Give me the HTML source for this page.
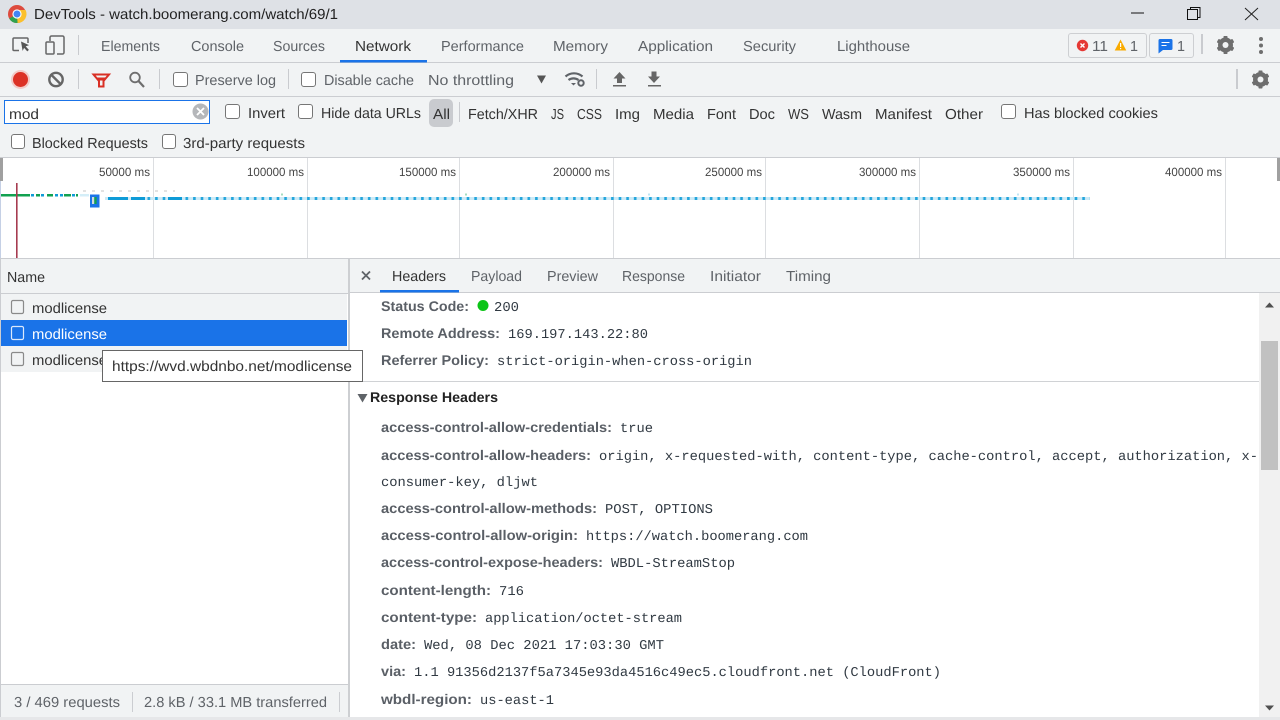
<!DOCTYPE html>
<html>
<head>
<meta charset="utf-8">
<style>
html,body{margin:0;padding:0;width:1280px;height:720px;overflow:hidden;background:#fff}
svg{display:block;position:absolute;left:0;top:0}
text{font-family:"Liberation Sans",sans-serif;font-size:14.5px;fill:#5f6368;white-space:pre;text-rendering:geometricPrecision}
.d{fill:#303942}
.k{fill:#333}
.b{font-weight:bold;font-size:14px;fill:#5a5f66;transform:translateY(-1px)}
.m{font-family:"Liberation Mono",monospace;font-size:13.5px;fill:#303942;transform:translateY(-1px)}
.t{font-size:12px;fill:#444}
.cb{fill:#fff;stroke:#767676;stroke-width:1}
</style>
</head>
<body>
<svg width="1280" height="720" viewBox="0 0 1280 720" xmlns="http://www.w3.org/2000/svg">
<defs>
<pattern id="dash" x="108" y="197" width="7.6" height="3" patternUnits="userSpaceOnUse">
<rect width="7.6" height="3" fill="#cdeaf6"/><rect x="1.500" width="2.600" height="3" fill="#22a5dc"/>
</pattern>
<g id="gear">
<circle r="5.6" fill="none" stroke="#6e6e6e" stroke-width="3.8"/>
<g fill="#6e6e6e">
<rect x="-2" y="-9" width="4" height="18" rx=".7"/>
<rect x="-2" y="-9" width="4" height="18" rx=".7" transform="rotate(60)"/>
<rect x="-2" y="-9" width="4" height="18" rx=".7" transform="rotate(120)"/>
</g>
<circle r="3" fill="#f1f3f4"/>
</g>
</defs>

<!-- title bar -->
<rect width="1280" height="29" fill="#dee1e6"/>
<circle cx="17" cy="14" r="9" fill="#dd4b3e"/>
<path d="M17 14 L9.2 18.5 A9 9 0 0 0 17.6 23 Z" fill="#2fa24f"/>
<path d="M17 14 L17.6 23 A9 9 0 0 0 25.6 10 L17 10 Z" fill="#fbc02d"/>
<circle cx="17" cy="14" r="4.6" fill="#fff"/><circle cx="17" cy="14" r="3.5" fill="#4285f4"/>
<text x="34" y="19" textLength="304" lengthAdjust="spacingAndGlyphs" style="fill:#222">DevTools - watch.boomerang.com/watch/69/1</text>
<path d="M1131 13h13" stroke="#111" stroke-width="1"/>
<path d="M1187.500 9.500h10v10h-10zM1190.500 9V7.500h9.500v10h-2.500" fill="none" stroke="#111" stroke-width="1"/>
<path d="M1245 8l13 12M1258 8l-13 12" stroke="#222" stroke-width="1"/>

<!-- tab bar -->
<rect y="29" width="1280" height="129" fill="#f1f3f4"/>
<rect y="62" width="1280" height="1" fill="#cbcdd1"/>
<rect y="96" width="1280" height="1" fill="#cbcdd1"/>
<path d="M19 50.500h-5a1 1 0 0 1-1-1V39a1 1 0 0 1 1-1h13a1 1 0 0 1 1 1v4" fill="none" stroke="#666" stroke-width="1.500"/>
<path d="M21 41.500l8 3.600-3.300 1.300 3.200 3.500-1.600 1.500-3.200-3.500-1.500 3z" fill="#555"/>
<path d="M50 41v-3.500a1.500 1.500 0 0 1 1.500-1.500h11a1.500 1.500 0 0 1 1.500 1.500v15a1.500 1.500 0 0 1-1.500 1.500H57" fill="none" stroke="#666" stroke-width="1.500"/>
<rect x="46" y="42" width="8" height="12" rx="1" fill="none" stroke="#666" stroke-width="1.500"/>
<rect x="78" y="35" width="1" height="20" fill="#c9cbcf"/>
<text x="101" y="51" textLength="59" lengthAdjust="spacingAndGlyphs">Elements</text>
<text x="191" y="51" textLength="53" lengthAdjust="spacingAndGlyphs">Console</text>
<text x="273" y="51" textLength="52" lengthAdjust="spacingAndGlyphs">Sources</text>
<text x="355" y="51" textLength="56" lengthAdjust="spacingAndGlyphs" class="k">Network</text>
<rect x="340" y="60" width="87" height="2.500" fill="#1a73e8"/>
<text x="441" y="51" textLength="83" lengthAdjust="spacingAndGlyphs">Performance</text>
<text x="553" y="51" textLength="55" lengthAdjust="spacingAndGlyphs">Memory</text>
<text x="638" y="51" textLength="75" lengthAdjust="spacingAndGlyphs">Application</text>
<text x="743" y="51" textLength="53" lengthAdjust="spacingAndGlyphs">Security</text>
<text x="837" y="51" textLength="73" lengthAdjust="spacingAndGlyphs">Lighthouse</text>

<!-- issue chips -->
<rect x="1068.500" y="33.500" width="78" height="24" rx="2.500" fill="#f1f3f4" stroke="#cdcfd2"/>
<circle cx="1082.500" cy="45.500" r="5.700" fill="#e53935"/>
<path d="M1080.500 43.500l4 4M1084.500 43.500l-4 4" stroke="#fff" stroke-width="1.400"/>
<text x="1092" y="51" textLength="16" lengthAdjust="spacingAndGlyphs">11</text>
<path d="M1120.500 39.500l5.800 11h-11.600z" fill="#f9ab00"/>
<rect x="1120" y="43" width="1.200" height="4" fill="#fff"/><rect x="1120" y="48" width="1.200" height="1.200" fill="#fff"/>
<text x="1130" y="51" textLength="8" lengthAdjust="spacingAndGlyphs">1</text>
<rect x="1149.500" y="33.500" width="44" height="24" rx="2.500" fill="#f1f3f4" stroke="#cdcfd2"/>
<path d="M1160 39h11a1.500 1.500 0 0 1 1.500 1.500v8a1.500 1.500 0 0 1-1.500 1.500h-8l-4.500 3.500V40.500A1.500 1.500 0 0 1 1160 39z" fill="#1a73e8"/>
<path d="M1161.500 42.500h8M1161.500 45.500h5" stroke="#fff" stroke-width="1.100"/>
<text x="1177" y="51" textLength="8" lengthAdjust="spacingAndGlyphs">1</text>
<rect x="1201" y="34" width="2" height="20" fill="#c9cbcf"/>
<use href="#gear" x="1225.500" y="45"/>
<circle cx="1261" cy="39" r="2" fill="#6e6e6e"/><circle cx="1261" cy="45.500" r="2" fill="#6e6e6e"/><circle cx="1261" cy="52" r="2" fill="#6e6e6e"/>

<!-- toolbar -->
<circle cx="20.500" cy="79.500" r="9.500" fill="#f3c9c6"/>
<circle cx="20.500" cy="79.500" r="7.500" fill="#dc3125"/>
<circle cx="56" cy="79.500" r="6.700" fill="none" stroke="#666" stroke-width="2.400"/>
<path d="M51.500 75l9 9" stroke="#666" stroke-width="2.400"/>
<rect x="78" y="69" width="1" height="20" fill="#c9cbcf"/>
<path d="M93.500 74.500h15.500l-5.500 6.500v5.500h-4.500V81z" fill="none" stroke="#d93025" stroke-width="2"/>
<path d="M96.500 77.500h9.500l-3 3h-3.500z" fill="#d93025"/>
<circle cx="135" cy="77.500" r="4.800" fill="none" stroke="#6e6e6e" stroke-width="1.800"/>
<path d="M138.500 81l5.500 6" stroke="#6e6e6e" stroke-width="2.200"/>
<rect x="159" y="69" width="1" height="20" fill="#c9cbcf"/>
<rect class="cb" x="173.500" y="72.500" width="14" height="14" rx="2.500"/>
<text x="195" y="85" textLength="81" lengthAdjust="spacingAndGlyphs">Preserve log</text>
<rect x="288" y="69" width="1" height="20" fill="#c9cbcf"/>
<rect class="cb" x="301.500" y="72.500" width="14" height="14" rx="2.500"/>
<text x="324" y="85" textLength="90" lengthAdjust="spacingAndGlyphs">Disable cache</text>
<text x="428" y="85" textLength="86" lengthAdjust="spacingAndGlyphs">No throttling</text>
<path d="M537 75.500h9l-4.500 8z" fill="#555"/>
<path d="M565.500 76.500a13 13 0 0 1 17 0M568.500 80a8.500 8.500 0 0 1 10 0" fill="none" stroke="#5f6368" stroke-width="2.200"/>
<path d="M571 83h5l-2.500 2.500z" fill="#5f6368"/>
<circle cx="581" cy="83" r="2.700" fill="none" stroke="#5f6368" stroke-width="2"/>
<rect x="596" y="69" width="1" height="20" fill="#c9cbcf"/>
<path d="M619.500 72l6 6.500h-3.500v4.500h-5v-4.500h-3.500z" fill="#666"/><rect x="613" y="85" width="13" height="1.500" fill="#666"/>
<path d="M651.500 71.500h5v5h3.500l-6 6.500-6-6.500h3.500z" fill="#666"/><rect x="648" y="85" width="13" height="1.500" fill="#666"/>
<rect x="1236" y="69" width="2" height="20" fill="#c9cbcf"/>
<use href="#gear" x="1260.500" y="79.500"/>

<!-- filter bar -->
<rect x="4.500" y="100.500" width="205" height="23" fill="#fff" stroke="#1a73e8"/>
<text x="9" y="119" textLength="30" lengthAdjust="spacingAndGlyphs" class="k">mod</text>
<circle cx="200.500" cy="111.500" r="8" fill="#b5b7ba"/>
<path d="M197 108l7 7M204 108l-7 7" stroke="#fff" stroke-width="1.800"/>
<rect class="cb" x="225.500" y="104.500" width="14" height="14" rx="2.500"/>
<text x="248" y="118" textLength="37" lengthAdjust="spacingAndGlyphs" class="k">Invert</text>
<rect class="cb" x="298.500" y="104.500" width="14" height="14" rx="2.500"/>
<text x="321" y="118" textLength="100" lengthAdjust="spacingAndGlyphs" class="k">Hide data URLs</text>
<rect x="429" y="99" width="24" height="28" rx="5" fill="#c9cbcf"/>
<text x="433" y="119" textLength="17" lengthAdjust="spacingAndGlyphs" class="k">All</text>
<rect x="459" y="102" width="1" height="20" fill="#c9cbcf"/>
<text x="468" y="119" textLength="70" lengthAdjust="spacingAndGlyphs" class="k">Fetch/XHR</text>
<text x="551" y="119" textLength="13" lengthAdjust="spacingAndGlyphs" class="k">JS</text>
<text x="577" y="119" textLength="25" lengthAdjust="spacingAndGlyphs" class="k">CSS</text>
<text x="615" y="119" textLength="25" lengthAdjust="spacingAndGlyphs" class="k">Img</text>
<text x="653" y="119" textLength="41" lengthAdjust="spacingAndGlyphs" class="k">Media</text>
<text x="707" y="119" textLength="29" lengthAdjust="spacingAndGlyphs" class="k">Font</text>
<text x="749" y="119" textLength="26" lengthAdjust="spacingAndGlyphs" class="k">Doc</text>
<text x="788" y="119" textLength="21" lengthAdjust="spacingAndGlyphs" class="k">WS</text>
<text x="822" y="119" textLength="40" lengthAdjust="spacingAndGlyphs" class="k">Wasm</text>
<text x="875" y="119" textLength="57" lengthAdjust="spacingAndGlyphs" class="k">Manifest</text>
<text x="945" y="119" textLength="38" lengthAdjust="spacingAndGlyphs" class="k">Other</text>
<rect class="cb" x="1001.500" y="104.500" width="14" height="14" rx="2.500"/>
<text x="1024" y="118" textLength="134" lengthAdjust="spacingAndGlyphs" class="k">Has blocked cookies</text>
<rect class="cb" x="11.500" y="134.500" width="13" height="14" rx="2.500"/>
<text x="32" y="148" textLength="116" lengthAdjust="spacingAndGlyphs" class="k">Blocked Requests</text>
<rect class="cb" x="162.500" y="134.500" width="13" height="14" rx="2.500"/>
<text x="183" y="148" textLength="122" lengthAdjust="spacingAndGlyphs" class="k">3rd-party requests</text>

<!-- overview -->
<rect y="157" width="1280" height="1" fill="#cbcdd1"/>
<rect y="158" width="1280" height="100" fill="#fff"/>
<rect x="0" y="158" width="3" height="23" fill="#a0a0a0"/>
<rect x="1277" y="158" width="3" height="23" fill="#a0a0a0"/>
<rect x="0" y="181" width="1" height="77" fill="#c5d0e5"/>
<g fill="#dcdee1">
<rect x="153" y="158" width="1" height="100"/><rect x="307" y="158" width="1" height="100"/><rect x="459" y="158" width="1" height="100"/><rect x="613" y="158" width="1" height="100"/><rect x="765" y="158" width="1" height="100"/><rect x="919" y="158" width="1" height="100"/><rect x="1073" y="158" width="1" height="100"/><rect x="1225" y="158" width="1" height="100"/>
</g>
<text class="t" x="99" y="176" textLength="51" lengthAdjust="spacingAndGlyphs">50000 ms</text>
<text class="t" x="247" y="176" textLength="57" lengthAdjust="spacingAndGlyphs">100000 ms</text>
<text class="t" x="399" y="176" textLength="57" lengthAdjust="spacingAndGlyphs">150000 ms</text>
<text class="t" x="553" y="176" textLength="57" lengthAdjust="spacingAndGlyphs">200000 ms</text>
<text class="t" x="705" y="176" textLength="57" lengthAdjust="spacingAndGlyphs">250000 ms</text>
<text class="t" x="859" y="176" textLength="57" lengthAdjust="spacingAndGlyphs">300000 ms</text>
<text class="t" x="1013" y="176" textLength="57" lengthAdjust="spacingAndGlyphs">350000 ms</text>
<text class="t" x="1165" y="176" textLength="57" lengthAdjust="spacingAndGlyphs">400000 ms</text>
<!-- network bars -->
<rect x="1" y="194" width="15" height="2.500" fill="#12a150"/>
<rect x="17" y="194" width="13" height="2.500" fill="#12a150"/>
<g fill="#12a150"><rect x="36" y="194" width="4" height="2.500"/><rect x="47" y="194" width="6" height="2.500"/><rect x="64" y="194" width="7" height="2.500"/><rect x="76" y="194" width="2" height="2.500"/></g>
<g fill="#0f9bd7"><rect x="31" y="194" width="3" height="2.500"/><rect x="41" y="194" width="3" height="2.500"/><rect x="55" y="194" width="3" height="2.500"/><rect x="60" y="194" width="3" height="2.500"/><rect x="72" y="194" width="3" height="2.500"/></g>
<rect x="80" y="194" width="9" height="2.500" fill="#d4eef8"/>
<path d="M83 191h92" stroke="#e2e2e2" stroke-width="2" stroke-dasharray="3 6" fill="none"/>
<rect x="90" y="194.500" width="9.500" height="13" fill="#1a73e8"/>
<rect x="92" y="197" width="2.300" height="7" fill="#cfd8dc"/><rect x="94.300" y="197" width="2.300" height="7" fill="#12a150"/>
<rect x="105" y="197" width="3" height="3" fill="#cdeaf6"/>
<rect x="108" y="197" width="982" height="3" fill="url(#dash)"/>
<rect x="108" y="197" width="20" height="3" fill="#0f9bd7"/>
<rect x="131" y="197" width="14" height="3" fill="#0f9bd7"/>
<rect x="168" y="197" width="14" height="3" fill="#0f9bd7"/>
<rect x="281" y="193.500" width="2" height="2" fill="#a5dcc0"/>
<rect x="465" y="193.500" width="2" height="2" fill="#a5dcc0"/>
<rect x="648" y="193.500" width="2" height="2" fill="#bfe5f4"/>
<rect x="1017" y="193.500" width="2" height="2" fill="#bfe5f4"/>
<rect x="16" y="183" width="1.600" height="75" fill="#a63c50"/>
<rect y="258" width="1280" height="1" fill="#cbcdd1"/>

<!-- left panel -->
<rect y="259" width="348" height="34" fill="#f1f3f4"/>
<rect y="293" width="348" height="1" fill="#cbcdd1"/>
<text x="7" y="282" textLength="38" lengthAdjust="spacingAndGlyphs" class="k">Name</text>
<rect x="1" y="294" width="346" height="26" fill="#f1f3f4"/>
<rect x="1" y="320" width="346" height="26" fill="#1a73e8"/>
<rect x="1" y="346" width="346" height="26" fill="#f1f3f4"/>
<rect x="11.500" y="300.500" width="12" height="13" rx="1.500" fill="none" stroke="#8a8a8a" stroke-width="1.200"/>
<rect x="11.500" y="326.500" width="12" height="13" rx="1.500" fill="none" stroke="#dbe8fb" stroke-width="1.200"/>
<rect x="11.500" y="352.500" width="12" height="13" rx="1.500" fill="none" stroke="#8a8a8a" stroke-width="1.200"/>
<text x="32" y="313" textLength="75" lengthAdjust="spacingAndGlyphs" class="k">modlicense</text>
<text x="32" y="339" textLength="75" lengthAdjust="spacingAndGlyphs" style="fill:#fff">modlicense</text>
<text x="32" y="365" textLength="75" lengthAdjust="spacingAndGlyphs" class="k">modlicense</text>
<rect x="0" y="259" width="1" height="458" fill="#cbcdd1"/>
<rect x="348" y="259" width="2" height="458" fill="#cdcfd2"/>

<!-- status bar -->
<rect x="1" y="684" width="347" height="33" fill="#f1f3f4"/>
<rect x="1" y="684" width="347" height="1" fill="#cbcdd1"/>
<text x="14" y="707" textLength="106" lengthAdjust="spacingAndGlyphs">3 / 469 requests</text>
<rect x="132" y="692" width="1" height="20" fill="#cbcdd1"/>
<text x="144" y="707" textLength="183" lengthAdjust="spacingAndGlyphs">2.8 kB / 33.1 MB transferred</text>
<rect x="339" y="692" width="1" height="20" fill="#cbcdd1"/>
<rect y="717" width="1280" height="3" fill="#e6e7e9"/>

<!-- detail tabs -->
<rect x="350" y="259" width="930" height="33" fill="#f1f3f4"/>
<rect x="350" y="292" width="930" height="1" fill="#cbcdd1"/>
<path d="M362 271.500l8 8M370 271.500l-8 8" stroke="#5f6368" stroke-width="1.800"/>
<text x="392" y="281" textLength="54" lengthAdjust="spacingAndGlyphs" class="k">Headers</text>
<rect x="380" y="290" width="79" height="2.500" fill="#1a73e8"/>
<text x="471" y="281" textLength="51" lengthAdjust="spacingAndGlyphs">Payload</text>
<text x="547" y="281" textLength="51" lengthAdjust="spacingAndGlyphs">Preview</text>
<text x="622" y="281" textLength="63" lengthAdjust="spacingAndGlyphs">Response</text>
<text x="710" y="281" textLength="51" lengthAdjust="spacingAndGlyphs">Initiator</text>
<text x="786" y="281" textLength="45" lengthAdjust="spacingAndGlyphs">Timing</text>

<!-- details -->
<text class="b" x="381" y="312" textLength="88" lengthAdjust="spacingAndGlyphs">Status Code:</text>
<circle cx="483" cy="305.500" r="5.500" fill="#0cc417"/>
<text class="m" x="494" y="312" textLength="25" lengthAdjust="spacingAndGlyphs">200</text>
<text class="b" x="381" y="339" textLength="119" lengthAdjust="spacingAndGlyphs">Remote Address:</text>
<text class="m" x="508" y="339" textLength="140" lengthAdjust="spacingAndGlyphs">169.197.143.22:80</text>
<text class="b" x="381" y="366" textLength="108" lengthAdjust="spacingAndGlyphs">Referrer Policy:</text>
<text class="m" x="497" y="366" textLength="255" lengthAdjust="spacingAndGlyphs">strict-origin-when-cross-origin</text>
<rect x="350" y="381" width="909" height="1" fill="#d0d2d5"/>
<path d="M357.500 394h10l-5 8.500z" fill="#5f6368"/>
<text class="b" x="370" y="403" textLength="128" lengthAdjust="spacingAndGlyphs" style="fill:#222">Response Headers</text>
<text class="b" x="381" y="433" textLength="231" lengthAdjust="spacingAndGlyphs">access-control-allow-credentials:</text>
<text class="m" x="620" y="433" textLength="33" lengthAdjust="spacingAndGlyphs">true</text>
<text class="b" x="381" y="461" textLength="210" lengthAdjust="spacingAndGlyphs">access-control-allow-headers:</text>
<text class="m" x="599" y="461" textLength="659" lengthAdjust="spacingAndGlyphs">origin, x-requested-with, content-type, cache-control, accept, authorization, x-</text>
<text class="m" x="381" y="487" textLength="157" lengthAdjust="spacingAndGlyphs">consumer-key, dljwt</text>
<text class="b" x="381" y="514" textLength="216" lengthAdjust="spacingAndGlyphs">access-control-allow-methods:</text>
<text class="m" x="605" y="514" textLength="108" lengthAdjust="spacingAndGlyphs">POST, OPTIONS</text>
<text class="b" x="381" y="541" textLength="197" lengthAdjust="spacingAndGlyphs">access-control-allow-origin:</text>
<text class="m" x="586" y="541" textLength="222" lengthAdjust="spacingAndGlyphs">https://watch.boomerang.com</text>
<text class="b" x="381" y="568" textLength="222" lengthAdjust="spacingAndGlyphs">access-control-expose-headers:</text>
<text class="m" x="611" y="568" textLength="124" lengthAdjust="spacingAndGlyphs">WBDL-StreamStop</text>
<text class="b" x="381" y="596" textLength="110" lengthAdjust="spacingAndGlyphs">content-length:</text>
<text class="m" x="499" y="596" textLength="25" lengthAdjust="spacingAndGlyphs">716</text>
<text class="b" x="381" y="623" textLength="96" lengthAdjust="spacingAndGlyphs">content-type:</text>
<text class="m" x="485" y="623" textLength="197" lengthAdjust="spacingAndGlyphs">application/octet-stream</text>
<text class="b" x="381" y="650" textLength="35" lengthAdjust="spacingAndGlyphs">date:</text>
<text class="m" x="424" y="650" textLength="240" lengthAdjust="spacingAndGlyphs">Wed, 08 Dec 2021 17:03:30 GMT</text>
<text class="b" x="381" y="677" textLength="25" lengthAdjust="spacingAndGlyphs">via:</text>
<text class="m" x="414" y="677" textLength="527" lengthAdjust="spacingAndGlyphs">1.1 91356d2137f5a7345e93da4516c49ec5.cloudfront.net (CloudFront)</text>
<text class="b" x="381" y="705" textLength="91" lengthAdjust="spacingAndGlyphs">wbdl-region:</text>
<text class="m" x="480" y="705" textLength="74" lengthAdjust="spacingAndGlyphs">us-east-1</text>

<!-- scrollbar -->
<rect x="1259" y="293" width="21" height="424" fill="#f1f1f1"/>
<rect x="1261" y="341" width="17" height="129" fill="#c1c1c1"/>
<path d="M1265 307.500h9l-4.500-5z" fill="#505050"/>
<path d="M1265 705.500h9l-4.500 5z" fill="#505050"/>

<!-- tooltip -->
<rect x="102.500" y="350.500" width="260" height="31" fill="#fff" stroke="#666"/>
<text x="112" y="371" textLength="240" lengthAdjust="spacingAndGlyphs" class="k">https://wvd.wbdnbo.net/modlicense</text>
</svg>
</body>
</html>
